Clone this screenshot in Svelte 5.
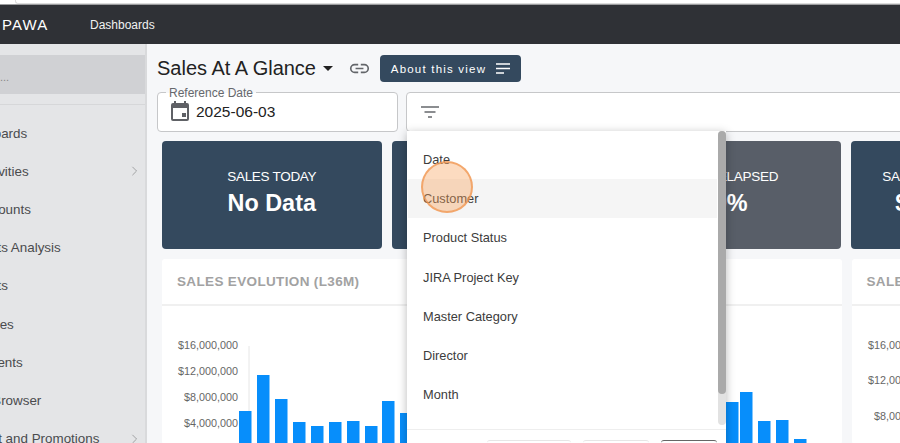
<script lang="ts">
  const navItems = [
    { label: 'Dashboards' },
    { label: 'My Activities', more: true },
    { label: 'My Accounts' },
    { label: 'Products Analysis' },
    { label: 'Products' },
    { label: 'Deliveries' },
    { label: 'Documents' },
    { label: 'Sales Browser' },
    { label: 'Pricelist and Promotions', more: true },
  ];

  const kpis = [
    { label: 'SALES TODAY', value: 'No Data' },
    { label: 'SALES THIS WEEK', value: 'No Data' },
    { label: 'TIME ELAPSED', value: '9%', grey: true },
    { label: 'SALES LAST 12 MONTHS', value: '$12,345,678' },
  ];

  const filterFields = ['Date', 'Customer', 'Product Status', 'JIRA Project Key', 'Master Category', 'Director', 'Month'];

  // tops of the bars, in svg coordinates of the first chart (svg starts at x=162, y=306)
  const bars = [
    [77, 105], [95, 69], [113, 93], [131, 116], [149, 120], [167, 116], [185, 115], [203, 120], [220, 95], [238, 107],
    [564, 96], [578, 86], [596, 115], [614, 114], [632, 133],
  ];
  const ticks = [
    { label: '$16,000,000', y: 39 },
    { label: '$12,000,000', y: 65 },
    { label: '$8,000,000', y: 91 },
    { label: '$4,000,000', y: 117 },
  ];
  const sideTicks = [
    { label: '$16,000,000', y: 39 },
    { label: '$12,000,000', y: 74 },
    { label: '$8,000,000', y: 110 },
  ];
</script>

<div class="page">
  <div class="strip"><div class="strip-field"></div></div>

  <header class="topbar">
    <span class="logo">PAWA</span>
    <span class="topnav">Dashboards</span>
  </header>

  <div class="body">
    <aside class="sidebar">
      <div class="current">...</div>
      <ul class="nav">
        {#each navItems as item}
          <li>
            <span>{item.label}</span>
            {#if item.more}
              <svg class="chev" viewBox="0 0 8 12" width="7" height="10"><path d="M1.5 1l5 5-5 5" fill="none" stroke="#9a9b9e" stroke-width="1.1" /></svg>
            {/if}
          </li>
        {/each}
      </ul>
    </aside>

    <main class="content">
      <div class="titlerow">
        <h1>Sales At A Glance</h1>
        <svg class="caret" viewBox="0 0 10 5" width="10" height="5"><path d="M0 0h10L5 5z" fill="#222" /></svg>
        <svg class="link" viewBox="0 0 24 12" width="21" height="11">
          <path d="M10.5 1.5H6.5a4.5 4.5 0 0 0 0 9h4M13.5 1.5h4a4.5 4.5 0 0 1 0 9h-4M7.5 6h9" fill="none" stroke="#63666a" stroke-width="1.9" />
        </svg>
        <button class="about">
          About this view
          <svg viewBox="0 0 14 11" width="14" height="11"><path d="M0 1h14M0 5.5h14M0 10h8" stroke="#fff" stroke-width="1.6" /></svg>
        </button>
      </div>

      <div class="filters">
        <div class="field date">
          <span class="legend">Reference Date</span>
          <svg class="cal" viewBox="0 0 18 20" width="18" height="20">
            <path fill="#5f6166" d="M3 0h2v2h8V0h2v2h1a2 2 0 0 1 2 2v14a2 2 0 0 1-2 2H2a2 2 0 0 1-2-2V4a2 2 0 0 1 2-2h1zM2 7v11h14V7zm9 5h4v4h-4z" />
          </svg>
          <span class="datevalue">2025-06-03</span>
        </div>
        <div class="field filter">
          <svg viewBox="0 0 18 12" width="18" height="12"><path d="M0 1h18M3.5 6h11M7 11h4" stroke="#66686c" stroke-width="1.6" /></svg>

          <div class="menu">
            <ul>
              {#each filterFields as f}
                <li class:hover={f === 'Customer'}>{f}</li>
              {/each}
            </ul>
            <div class="scroll"><div class="thumb"></div></div>
            <div class="menufoot">
              <span class="fbtn" style="width:84px"></span>
              <span class="fbtn" style="width:66px"></span>
              <span class="fbtn dark" style="width:56px"></span>
            </div>
          </div>
          <div class="cursor"></div>
        </div>
      </div>

      <div class="kpis">
        {#each kpis as k}
          <div class="kpi" class:grey={k.grey}>
            <div class="kpilabel">{k.label}</div>
            <div class="kpivalue">{k.value}</div>
          </div>
        {/each}
      </div>

      <div class="charts">
        <section class="chart">
          <h2>SALES EVOLUTION (L36M)</h2>
          <svg viewBox="0 0 680 138" width="680" height="138">
            <line x1="87" y1="40" x2="87" y2="138" stroke="#e6e6e6" />
            {#each ticks as t}
              <text x="76" y={t.y + 4} text-anchor="end">{t.label}</text>
            {/each}
            {#each bars as [x, y]}
              <rect {x} {y} width="12.5" height={138 - y} fill="#078efb" />
            {/each}
          </svg>
        </section>
        <section class="chart">
          <h2>SALES BY MONTH</h2>
          <svg viewBox="0 0 220 138" width="220" height="138">
            {#each sideTicks as t}
              <text x="76" y={t.y + 4} text-anchor="end">{t.label}</text>
            {/each}
          </svg>
        </section>
      </div>
    </main>
  </div>
</div>

<style>
  :global(body) { margin: 0; background: #f6f7f9; }
  .page {
    width: 900px;
    height: 443px;
    overflow: hidden;
    display: flex;
    flex-direction: column;
    font-family: "Liberation Sans", Arial, sans-serif;
    color: #333;
  }
  .strip { height: 5px; background: #fff; border-bottom: 1px solid #9c9d9f; box-sizing: border-box; padding-left: 15px; }
  .strip-field { height: 3px; border-bottom: 1px solid #dcdcdc; border-left: 1px solid #dcdcdc; border-radius: 0 0 0 3px; }
  .topbar {
    height: 39px;
    flex: none;
    background: #2f3136;
    color: #fff;
    display: flex;
    align-items: center;
    gap: 41px;
    padding-left: 2px;
    box-sizing: border-box;
  }
  .logo { font-size: 15px; letter-spacing: 1.1px; width: 47px; }
  .topnav { font-size: 12px; color: #f1f1f1; }

  .body { flex: 1; min-height: 0; display: flex; }
  .sidebar {
    width: 147px;
    flex: none;
    box-sizing: border-box;
    overflow: hidden;
    background: #e4e5e7;
    border-right: 2px solid #d9dadc;
    padding-top: 11px;
  }
  .current { height: 39px; background: #d0d1d4; color: #888; font-size: 11px; line-height: 44px; margin-bottom: 10px; }
  .nav { list-style: none; margin: 0; padding: 0; border-top: 1px solid #d6d7d9; }
  .nav li {
    height: 38.2px;
    margin-left: -45px;
    padding-right: 7px;
    box-sizing: border-box;
    display: flex;
    align-items: center;
    justify-content: space-between;
    font-size: 13.4px;
    color: #4a4b4e;
    position: relative;
    top: 9px;
  }

  .content { flex: 1; min-width: 0; overflow: hidden; padding: 11px 0 0 9px; }
  .titlerow { height: 27px; display: flex; align-items: center; margin-left: 1px; }
  h1 { margin: 0; font-size: 20px; font-weight: 400; color: #222; white-space: nowrap; }
  .caret { margin-left: 7px; }
  .link { margin-left: 16px; }
  .about {
    margin-left: 10px;
    height: 27px;
    width: 141px;
    border: 0;
    border-radius: 4px;
    background: #34495e;
    color: #fff;
    font: 400 11.5px "Liberation Sans", Arial, sans-serif;
    letter-spacing: 1.2px;
    display: flex;
    align-items: center;
    justify-content: center;
    gap: 10px;
    padding: 0;
  }

  .filters { display: flex; gap: 8px; margin: 10px 0 0 1px; }
  .field {
    height: 40px;
    box-sizing: border-box;
    border: 1px solid #c6c7c9;
    border-radius: 4px;
    background: #fff;
    display: flex;
    align-items: center;
    position: relative;
    flex: none;
  }
  .date { width: 241px; padding-left: 13px; gap: 7px; }
  .cal { margin-bottom: 3px; }
  .legend {
    position: absolute;
    top: -6px;
    left: 8px;
    padding: 0 3px;
    background: linear-gradient(#f6f7f9 50%, #fff 50%);
    font-size: 12px;
    line-height: 13px;
    color: #66686c;
  }
  .datevalue { font-size: 15.5px; color: #222; }
  .filter { width: 560px; padding-left: 14px; }

  .menu {
    position: absolute;
    top: 38px;
    left: 0;
    width: 319px;
    height: 320px;
    background: #fff;
    box-shadow: 0 2px 9px rgba(0, 0, 0, 0.28);
    z-index: 2;
  }
  .menu ul { list-style: none; margin: 0; padding: 9px 9px 0 1px; }
  .menu li { height: 39.2px; line-height: 39.2px; font-size: 12.8px; color: #3c3c3c; padding-left: 15px; }
  .menu li.hover { background: #f5f5f5; }
  .scroll { position: absolute; top: 0; right: 0; width: 8px; height: 294px; background: #e2e2e2; border-radius: 4px; }
  .thumb { height: 263px; background: #aaa; border-radius: 4px; }
  .menufoot {
    position: absolute;
    top: 298px;
    left: 0;
    right: 0;
    border-top: 1px solid #eee;
    display: flex;
    justify-content: flex-end;
    gap: 12px;
    padding: 10px 9px 0 0;
  }
  .fbtn { height: 20px; border-top: 1px solid #e6e6e6; border-radius: 3px 3px 0 0; }
  .fbtn.dark { border-top: 1px solid #666; }
  .cursor {
    position: absolute;
    top: 68px;
    left: 14px;
    width: 48px;
    height: 48px;
    border: 2px solid rgba(240, 150, 80, 0.75);
    border-radius: 50%;
    background: rgba(248, 160, 90, 0.38);
    z-index: 3;
  }

  .kpis { display: grid; grid-template-columns: repeat(4, 219.5px); gap: 10px; margin: 9px 0 0 6px; }
  .kpi {
    height: 108px;
    box-sizing: border-box;
    border-radius: 4px;
    background: #34495e;
    color: #fff;
    text-align: center;
    padding-top: 28px;
    white-space: nowrap;
  }
  .kpi.grey { background: #585e68; }
  .kpilabel { font-size: 13.5px; line-height: 16px; letter-spacing: -0.3px; }
  .kpivalue { font-size: 23.4px; font-weight: 700; line-height: 30px; margin-top: 3px; }

  .charts { display: grid; grid-template-columns: repeat(2, 679.5px); gap: 10px; margin: 10px 0 0 6px; }
  .chart { background: #fff; border-radius: 3px; }
  h2 {
    margin: 0;
    height: 47px;
    box-sizing: border-box;
    padding: 14px 0 0 15px;
    border-bottom: 2px solid #f0f0f0;
    font-size: 13.5px;
    line-height: 17px;
    font-weight: 700;
    letter-spacing: 0.35px;
    color: #a2a2a2;
  }
  .chart svg { display: block; }
  .chart text { font-size: 10.8px; fill: #666; font-family: "Liberation Sans", Arial, sans-serif; }
</style>
